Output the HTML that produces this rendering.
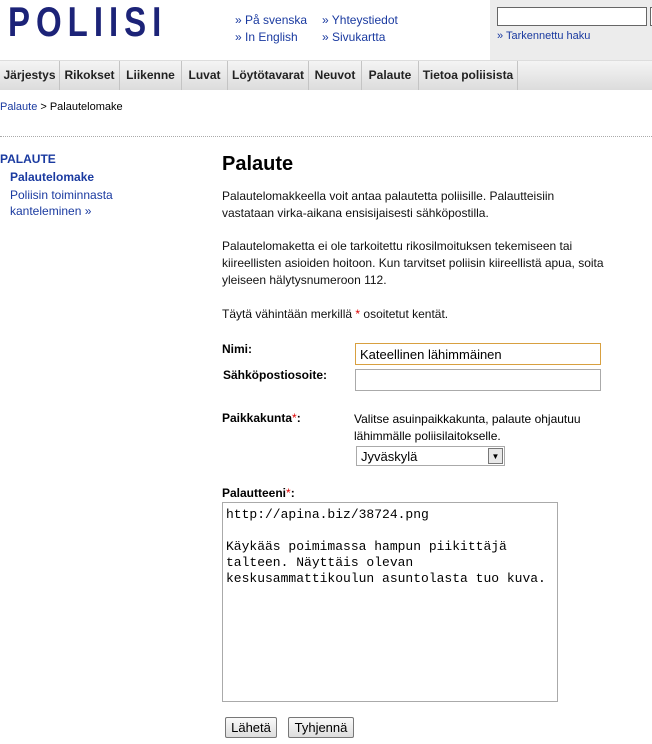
<!DOCTYPE html>
<html><head><meta charset="utf-8"><style>
body{margin:0;width:652px;height:744px;background:#fff;font-family:"Liberation Sans",Arial,sans-serif;font-size:12px;color:#000;position:relative;overflow:hidden}
.a{position:absolute;white-space:nowrap}
a,.l{color:#1a3aa0;text-decoration:none}
.nav{position:absolute;top:60px;left:0;width:652px;height:29px;background:linear-gradient(#f4f4f4,#dcdcdc);border-top:1px solid #ddd}
.nav span{position:absolute;top:0;height:29px;line-height:29px;font-weight:bold;font-size:12px;color:#222;text-align:center;border-right:1px solid #c4c4c4}
.p{position:absolute;left:222px;line-height:17px;font-size:12px;color:#111}
.in{position:absolute;border:1px solid #aaa;background:#fff;box-sizing:border-box}
.b{font-weight:bold;font-size:12px}
.btn{position:absolute;top:717px;height:21px;border:1px solid #777;border-radius:2px;background:linear-gradient(#fafafa,#ddd);font-size:13px;line-height:19px;text-align:center;box-sizing:border-box}
.r{color:#d00}
</style></head><body>
<div class="a" style="left:8px;top:1px;font-size:33px;font-weight:900;letter-spacing:6px;color:#1c2378;line-height:33px;transform:scaleY(1.25);transform-origin:0 0">POLIISI</div>
<div class="a l" style="left:235px;top:13px">» På svenska</div>
<div class="a l" style="left:235px;top:30px">» In English</div>
<div class="a l" style="left:322px;top:13px">» Yhteystiedot</div>
<div class="a l" style="left:322px;top:30px">» Sivukartta</div>
<div style="position:absolute;left:490px;top:0;width:162px;height:60px;background:#ececec"></div>
<div class="in" style="left:497px;top:7px;width:150px;height:19px;border-color:#666"></div>
<div class="in" style="left:650px;top:7px;width:10px;height:19px;border-color:#666"></div>
<div class="a l" style="left:497px;top:30px;font-size:11px">» Tarkennettu haku</div>
<div class="nav">
<span style="left:0;width:59px">Järjestys</span>
<span style="left:60px;width:59px">Rikokset</span>
<span style="left:120px;width:61px">Liikenne</span>
<span style="left:182px;width:45px">Luvat</span>
<span style="left:228px;width:80px">Löytötavarat</span>
<span style="left:309px;width:52px">Neuvot</span>
<span style="left:362px;width:56px">Palaute</span>
<span style="left:419px;width:98px">Tietoa poliisista</span>
</div>
<div class="a" style="left:0;top:101px;font-size:11px"><span class="l">Palaute</span> &gt; Palautelomake</div>
<div style="position:absolute;left:0;top:136px;width:652px;border-top:1px dotted #aaa"></div>
<div class="a l" style="left:0;top:152px;font-weight:bold;font-size:12px">PALAUTE</div>
<div class="a l" style="left:10px;top:170px;font-weight:bold">Palautelomake</div>
<div class="a l" style="left:10px;top:187px;line-height:16px">Poliisin toiminnasta<br>kanteleminen »</div>
<div class="a" style="left:222px;top:153px;font-size:20px;font-weight:bold">Palaute</div>
<div class="p" style="top:188px">Palautelomakkeella voit antaa palautetta poliisille. Palautteisiin<br>vastataan virka-aikana ensisijaisesti sähköpostilla.</div>
<div class="p" style="top:238px">Palautelomaketta ei ole tarkoitettu rikosilmoituksen tekemiseen tai<br>kiireellisten asioiden hoitoon. Kun tarvitset poliisin kiireellistä apua, soita<br>yleiseen hälytysnumeroon 112.</div>
<div class="p" style="top:306px">Täytä vähintään merkillä <span class="r">*</span> osoitetut kentät.</div>
<div class="a b" style="left:222px;top:342px">Nimi:</div>
<div class="in" style="left:355px;top:343px;width:246px;height:22px;border-color:#d8a040;padding:3px 4px;font-size:13px">Kateellinen lähimmäinen</div>
<div class="a b" style="left:223px;top:368px">Sähköpostiosoite:</div>
<div class="in" style="left:355px;top:369px;width:246px;height:22px"></div>
<div class="a b" style="left:222px;top:411px">Paikkakunta<span class="r" style="font-weight:normal">*</span>:</div>
<div class="a" style="left:354px;top:411px;line-height:17px">Valitse asuinpaikkakunta, palaute ohjautuu<br>lähimmälle poliisilaitokselle.</div>
<div class="in" style="left:356px;top:446px;width:149px;height:20px;padding:2px 4px;font-size:13px">Jyväskylä<div style="position:absolute;right:1px;top:1px;width:15px;height:16px;border:1px solid #777;box-sizing:border-box;background:#e8e8e8;font-size:8px;line-height:15px;text-align:center">▼</div></div>
<div class="a b" style="left:222px;top:486px">Palautteeni<span class="r" style="font-weight:normal">*</span>:</div>
<div class="in" style="left:222px;top:502px;width:336px;height:200px;padding:4px 3px;font-family:'Liberation Mono',monospace;font-size:13px;line-height:16px;white-space:pre">http://apina.biz/38724.png

Käykääs poimimassa hampun piikittäjä
talteen. Näyttäis olevan
keskusammattikoulun asuntolasta tuo kuva.</div>
<div class="btn" style="left:225px;width:52px">Lähetä</div>
<div class="btn" style="left:288px;width:66px">Tyhjennä</div>
</body></html>
